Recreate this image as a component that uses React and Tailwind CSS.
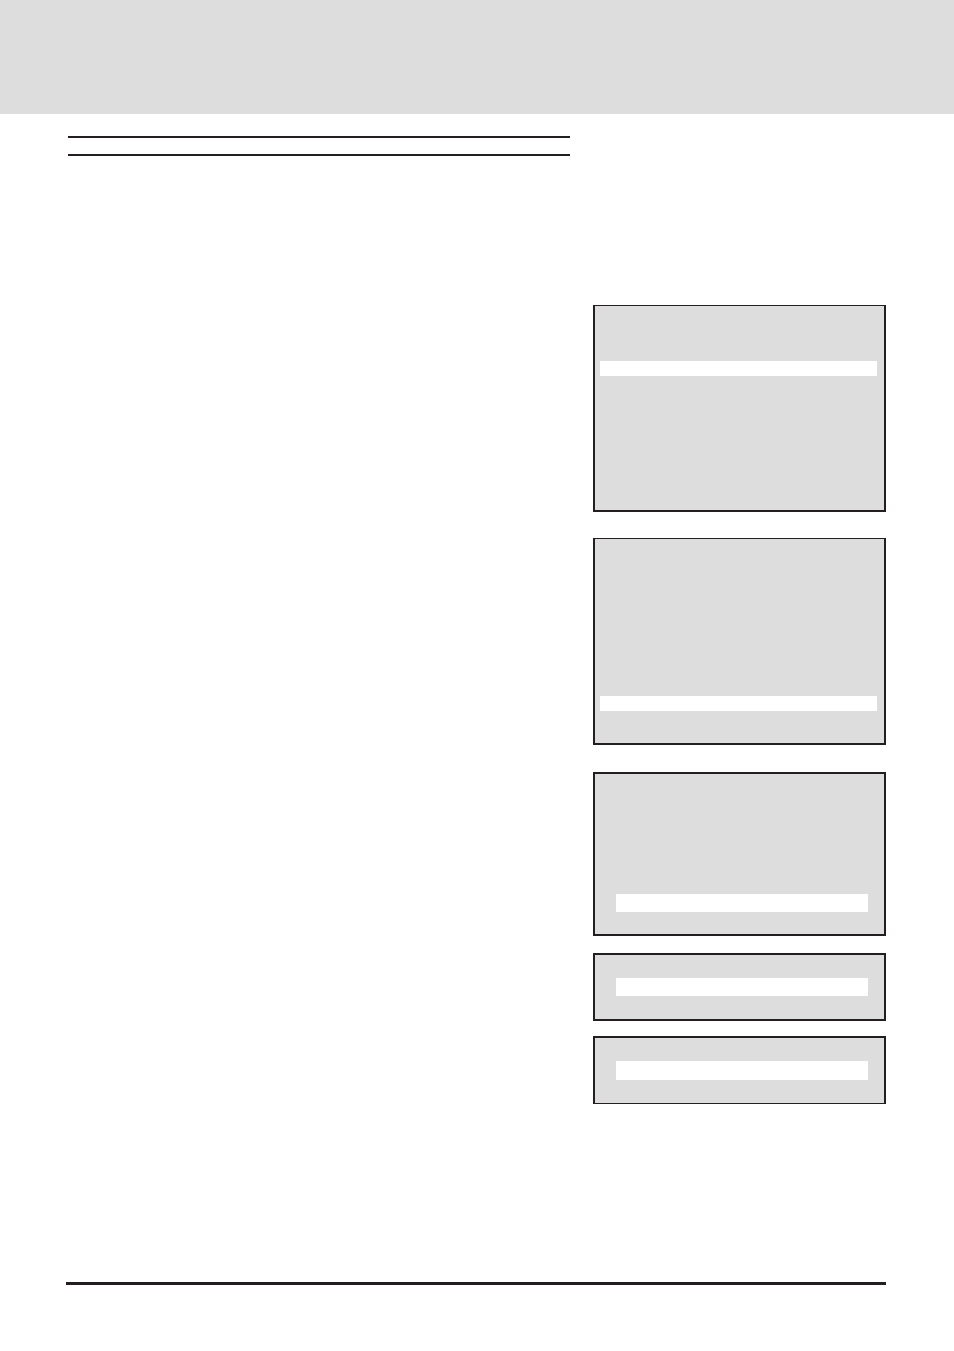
import clsx from 'clsx';

const screens = [
  { id: 'menu', frame: 'border-t pt-[55px] pr-[7px] pb-[134px] pl-[5px]', bar: 'h-[15px]' },
  { id: 'submenu', frame: 'mt-[26px] border-t pt-[157px] pr-[7px] pb-8 pl-[5px]', bar: 'h-[15px]' },
  { id: 'options', frame: 'mt-[27px] pt-[120px] pr-4 pb-[22px] pl-[21px]', bar: 'h-[18px]' },
  { id: 'first-value', frame: 'mt-[17px] pt-[23px] pr-4 pb-[23px] pl-[21px]', bar: 'h-[18px]' },
  { id: 'second-value', frame: 'mt-[15px] border-b pt-[23px] pr-4 pb-[23px] pl-[21px]', bar: 'h-[19px]' },
];

/**
 * @component Screen
 * @desc A framed grey display with one highlighted row.
 * @param {object} props
 * @param {string} props.frame - Spacing and border classes of the frame.
 * @param {string} props.bar - Height class of the highlighted row.
 */
function Screen({ frame, bar }) {
  return (
    <div className={clsx('border-[#231f20] bg-[#dddddd] border-x-2', !frame.includes('border-t') && 'border-t-2', !frame.includes('border-b') && 'border-b-2', frame)}>
      <div className={clsx('bg-white', bar)} />
    </div>
  );
}

export default function App() {
  return (
    <div className="min-h-screen bg-white">
      <header className="h-[114px] bg-[#dddddd]" />

      <main className="flex gap-[23px] px-[68px] pt-[22px]">
        {/* Empty title band between two rules */}
        <section className="flex-1">
          <div className="h-5 border-y-2 border-[#231f20]" />
        </section>

        <aside className="w-[293px] pt-[169px]">
          {screens.map((screen) => (
            <Screen key={screen.id} frame={screen.frame} bar={screen.bar} />
          ))}
        </aside>
      </main>

      <footer className="pt-[178px] pr-[68px] pb-[66px] pl-[66px]">
        <div className="h-[3px] bg-[#231f20]" />
      </footer>
    </div>
  );
}
